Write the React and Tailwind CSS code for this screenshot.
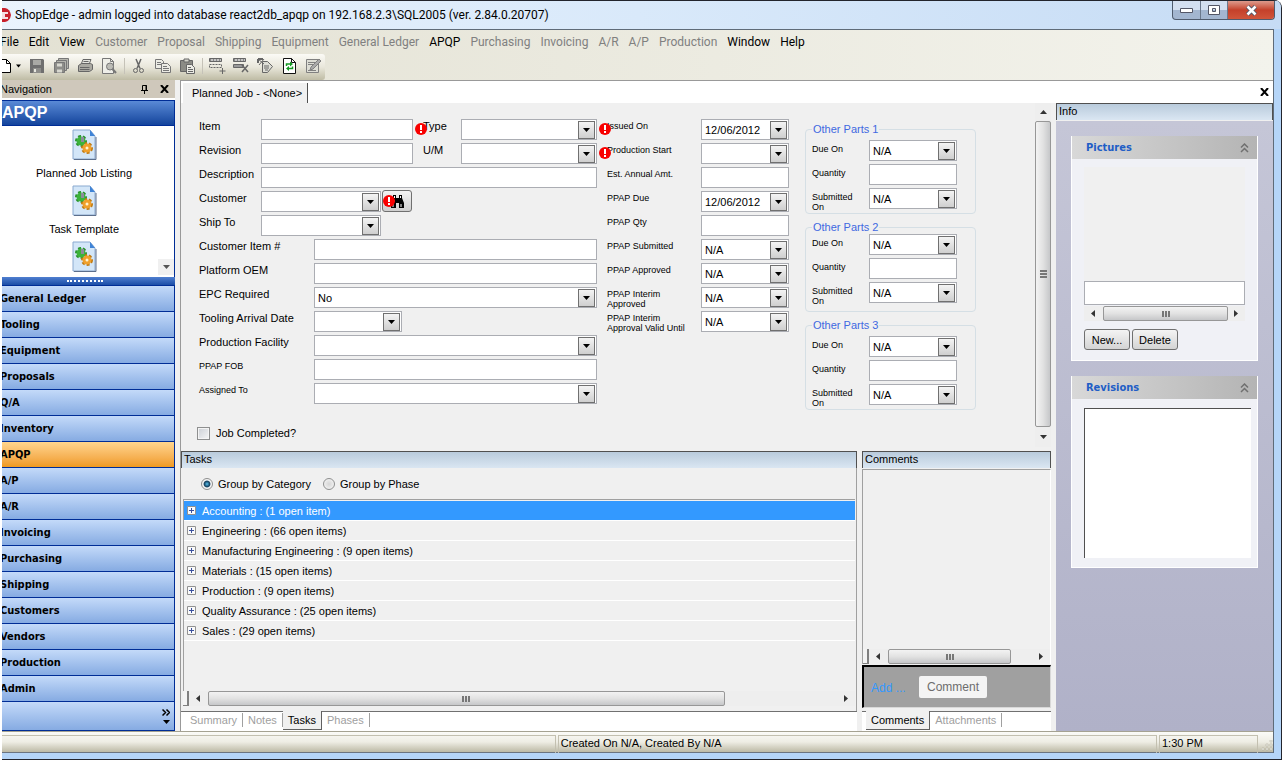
import { useState } from 'react';

const MENU = [
  ['File', true], ['Edit', true], ['View', true], ['Customer', false], ['Proposal', false],
  ['Shipping', false], ['Equipment', false], ['General Ledger', false], ['APQP', true],
  ['Purchasing', false], ['Invoicing', false], ['A/R', false], ['A/P', false],
  ['Production', false], ['Window', true], ['Help', true],
];

const MODULES = [
  'General Ledger', 'Tooling', 'Equipment', 'Proposals', 'Q/A', 'Inventory', 'APQP', 'A/P',
  'A/R', 'Invoicing', 'Purchasing', 'Shipping', 'Customers', 'Vendors', 'Production', 'Admin',
];

const TASKS = [
  'Accounting : (1 open item)',
  'Engineering : (66 open items)',
  'Manufacturing Engineering : (9 open items)',
  'Materials : (15 open items)',
  'Production : (9 open items)',
  'Quality Assurance : (25 open items)',
  'Sales : (29 open items)',
];

const TOOLBAR = [
  ['Save', 'save'], ['Save all', 'saveAll'], ['Print', 'print'], ['Print preview', 'preview'], null,
  ['Cut', 'cut'], ['Copy', 'copy'], ['Paste', 'paste'], null,
  ['Add row', 'addRow'], ['Delete row', 'delRow'], ['Properties', 'props'], ['Refresh', 'refresh'], ['Edit', 'edit'],
];

const ICONS = {
  save: (
    <g>
      <path d="M1 1h13l1 1v13H1z" fill="#6f6f6f" />
      <path d="M4 2h8v5H4z" fill="#a9a9a5" />
      <path d="M4 10h8v5H4z" fill="#8d8d8a" />
      <path d="M5 11h2v3H5z" fill="#e8e8e0" />
    </g>
  ),
  saveAll: (
    <g stroke="#777" fill="#b5b5ae">
      <path d="M5.500 .5h10v10h-10z" />
      <path d="M3.500 2.500h10v10h-10z" />
      <path d="M1.500 4.500h10v10h-10z" fill="#8e8e8a" />
      <path d="M4 5.500h5v3H4zM4 11.500h5v3H4z" fill="#d8d8d0" stroke="none" />
    </g>
  ),
  print: (
    <g stroke="#666" fill="#e4e4de">
      <path d="M6 1.500h8l-2 5H4z" />
      <path d="M1.500 7.500l3-2h9l2 1v5l-3 2h-11z" fill="#aaa9a2" />
      <path d="M3 9.500h9.500M3 11.500h9.500M6.500 3.500h5" fill="none" />
    </g>
  ),
  preview: (
    <g stroke="#777" fill="#eeeee8">
      <path d="M1.500 .5h8l3 3v12h-11z" />
      <path d="M9.500 .5v3h3" fill="none" />
      <circle cx="9" cy="8.500" r="3.500" fill="#bcbcb6" />
      <path d="M11.500 11l3.500 4" strokeWidth="2" />
    </g>
  ),
  cut: (
    <g stroke="#666" fill="none">
      <path d="M5 1l4 9.500M10 1L6 10.500" strokeWidth="1.500" />
      <circle cx="4.500" cy="12.500" r="2" />
      <circle cx="10.500" cy="12.500" r="2" />
    </g>
  ),
  copy: (
    <g stroke="#777" fill="#ecece5">
      <path d="M.5 1.500h6l2 2v7h-8z" />
      <path d="M2 4.500h4M2 6.500h4" />
      <path d="M6.500 5.500h6l3 3v6h-9z" />
      <path d="M8 8.500h4M8 10.500h6M8 12.500h6" />
    </g>
  ),
  paste: (
    <g stroke="#666">
      <path d="M1.500 2.500h12v11h-12z" fill="#8c8c86" />
      <path d="M5 1h5v3H5z" fill="#d5d5cc" />
      <path d="M7.500 6.500h5l3 3v6h-8z" fill="#ecece5" />
      <path d="M9 9.500h3M9 11.500h5M9 13.500h5" />
    </g>
  ),
  addRow: (
    <g stroke="#666" fill="none">
      <path d="M.5 .5h12v3H.5z" fill="#888" />
      <path d="M2 2h10" stroke="#fff" strokeDasharray="2 1" />
      <path d="M.5 6.500h12v3H.5z" strokeDasharray="2 1" />
      <path d="M13.500 10v6M10.500 13h6" />
    </g>
  ),
  delRow: (
    <g stroke="#666" fill="none">
      <path d="M.5 .5h12v3H.5z" fill="#888" />
      <path d="M2 2h10" stroke="#fff" strokeDasharray="2 1" />
      <path d="M.5 6.500h10v3H.5z" fill="#999" />
      <path d="M9 7l6 7M15 7l-6 7" strokeWidth="1.500" />
    </g>
  ),
  props: (
    <g stroke="#666" fill="#deded6">
      <path d="M5.500 3.500h5l5 5-5 6h-5z" />
      <path d="M1 1l6 5M7 1L2 7M7 8h5M7 10h5M8 12h3" fill="none" />
      <path d="M1 1h5M1 1v4" fill="none" strokeWidth="2" />
    </g>
  ),
  refresh: (
    <g>
      <path d="M2.500 .5h8l4 4v11h-12z" fill="#fff" stroke="#111" />
      <path d="M10.500 .5v4h4" fill="none" stroke="#111" />
      <path d="M5.500 8V6h4M11.500 8.500v2h-4" fill="none" stroke="#149a22" strokeWidth="1.500" />
      <path d="M9 3.500L12 6 9 8.500zM8 8l-3 2.500L8 13z" fill="#149a22" />
    </g>
  ),
  edit: (
    <g stroke="#808080" fill="#deded6">
      <path d="M1.500 1.500h12v13h-12z" />
      <path d="M3 4.500h7M3 6.500h5M3 12.500h8" />
      <path d="M5 12l1-3 8-8 2 2-8 8z" fill="#aaa" />
    </g>
  ),
};

function ToolIcon({ name }) {
  return (
    <svg width="16" height="16" viewBox="0 0 16 16" className="overflow-visible" aria-hidden="true">
      {ICONS[name]}
    </svg>
  );
}

function Caret({ className = '' }) {
  return (
    <svg width="7" height="4" viewBox="0 0 7 4" className={className} aria-hidden="true">
      <path d="M0 0h7L3.500 4z" fill="currentColor" />
    </svg>
  );
}

function CloseX() {
  return (
    <svg width="9" height="8" viewBox="0 0 9 8" aria-hidden="true">
      <path d="M1 0l7 8M8 0L1 8" stroke="#000" strokeWidth="2" />
    </svg>
  );
}

function ErrorMark() {
  return (
    <svg width="12" height="12" viewBox="0 0 12 12" className="absolute left-full top-1 ml-0.5 z-10" role="img" aria-label="Required">
      <circle cx="6" cy="6" r="6" fill="#f80000" />
      <path d="M5 2h2v5H5zM5 8h2v2H5z" fill="#fff" />
    </svg>
  );
}

function TextBox({ id, width, error }) {
  return (
    <div className={`relative ${width}`}>
      <input id={id} type="text" className="block w-full h-[21px] px-1 bg-white border border-[#abadb3]" />
      {error && <ErrorMark />}
    </div>
  );
}

function Combo({ id, width, value = '', error }) {
  return (
    <div className={`relative ${width}`}>
      <select id={id} defaultValue={value} className="block appearance-none w-full h-[21px] pl-[3px] pr-5 bg-white border border-[#abadb3]">
        <option value={value}>{value}</option>
      </select>
      <span className="absolute right-0.5 top-0.5 w-[17px] h-[18px] flex items-center justify-center border border-[#707070] bg-linear-to-b from-[#f4f4f4] to-[#cfcfcf] pointer-events-none">
        <Caret />
      </span>
      {error && <ErrorMark />}
    </div>
  );
}

function Row({ label, id, labelWidth, small, children }) {
  return (
    <div className="flex h-6">
      <label htmlFor={id} className={`${labelWidth} shrink-0 whitespace-nowrap ${small ? 'text-[9px] leading-[10px] pt-0.5' : 'leading-[14px]'}`}>
        {label}
      </label>
      {children}
    </div>
  );
}

function OtherParts({ n, pad }) {
  const rows = [['Due On', true], ['Quantity', false], ['Submitted On', true]];
  return (
    <fieldset className={`w-[171px] h-[92px] border border-[#d5dfe5] rounded-[4px] px-[6px] ${pad}`}>
      <legend className="px-px leading-[14px] text-[#4169e1]">Other Parts {n}</legend>
      {rows.map(([label, combo]) => {
        const id = `${label.replace(' ', '-')}-${n}`;
        return (
          <div key={label} className="flex h-6">
            <label htmlFor={id} className="w-[57px] shrink-0 pr-2 pt-1 text-[9px] leading-[10px]">{label}</label>
            {combo ? <Combo id={id} width="w-[88px]" value="N/A" /> : <TextBox id={id} width="w-[88px]" />}
          </div>
        );
      })}
    </fieldset>
  );
}

function Arrow({ dir }) {
  const d = { left: 'M5 0v7L1 3.500z', right: 'M1 0v7L5 3.500z', up: 'M0 5h7L3.500 1z', down: 'M0 1h7L3.500 5z' }[dir];
  return (
    <svg width="7" height="7" viewBox="0 0 7 7" className="shrink-0" aria-hidden="true">
      <path d={d} fill="#333" />
    </svg>
  );
}

function HScroll({ thumb, grip }) {
  return (
    <div className="flex items-stretch h-[15px] bg-[#eeeeee]">
      {grip && <span className="w-[6px] shrink-0 border-r-2 border-b border-[#808080] bg-[#f4f4f4]" />}
      <span className="w-[19px] shrink-0 flex items-center justify-center"><Arrow dir="left" /></span>
      <span className="flex-1 flex">
        <span className={`${thumb} flex items-center justify-center gap-px border border-[#979797] rounded-[2px] bg-linear-to-b from-[#f3f3f3] via-[#e2e2e2] to-[#c6c7c9]`}>
          <i className="w-0.5 h-1.5 bg-[#777]" /><i className="w-0.5 h-1.5 bg-[#777]" /><i className="w-0.5 h-1.5 bg-[#777]" />
        </span>
      </span>
      <span className="w-[17px] shrink-0 flex items-center justify-center"><Arrow dir="right" /></span>
    </div>
  );
}

function VScroll() {
  return (
    <div className="w-[16px] shrink-0 flex flex-col bg-[#eeeeee]">
      <span className="h-[18px] flex items-center justify-center"><Arrow dir="up" /></span>
      <span className="flex-1 flex flex-col items-center justify-center gap-px border border-[#979797] rounded-[2px] bg-linear-to-r from-[#f3f3f3] via-[#e2e2e2] to-[#c6c7c9]">
        <i className="w-[7px] h-0.5 bg-[#777]" /><i className="w-[7px] h-0.5 bg-[#777]" /><i className="w-[7px] h-0.5 bg-[#777]" />
      </span>
      <span className="h-[20px] flex items-center justify-center"><Arrow dir="down" /></span>
    </div>
  );
}

function PaneTitle({ children }) {
  return (
    <h2 className="h-[17px] shrink-0 px-0.5 leading-[15px] border border-b-0 border-[#505050] bg-linear-to-b from-[#b9cbdc] to-[#dae6f2]">
      {children}
    </h2>
  );
}

function Tabs({ items, active, onSelect }) {
  return (
    <div role="tablist" className="flex h-[20px] shrink-0 bg-white pl-1 border-t border-[#707070]">
      {items.map(t => (
        <button
          key={t}
          role="tab"
          aria-selected={t === active}
          onClick={() => onSelect(t)}
          className={t === active
            ? 'px-[5px] -mt-px h-[19px] bg-[#f0f0f0] border-r border-b border-[#606060] text-black'
            : 'px-[5px] mt-px mb-1 border-r border-[#a0a0a0] text-[#a0a0a0]'}
        >
          {t}
        </button>
      ))}
    </div>
  );
}

function DocumentIcon() {
  return (
    <svg width="25" height="32" viewBox="0 0 25 32" className="shrink-0" aria-hidden="true">
      <path d="M1 1h17l5 6v23H1z" fill="#d3e6f8" stroke="#8aa9cf" />
      <path d="M2 30.500h22V8" fill="none" stroke="#5c6f8c" />
      <path d="M18 1v6h5z" fill="#3f83d6" />
      <g fill="none" strokeDasharray="3 2">
        <circle cx="9" cy="12" r="5" stroke="#28912b" strokeWidth="2" />
        <circle cx="15" cy="19" r="5" stroke="#c07a10" strokeWidth="2" />
      </g>
      <circle cx="9" cy="12" r="4.500" fill="#3cb33b" />
      <circle cx="15" cy="19" r="4.500" fill="#f0a02c" />
      <circle cx="15" cy="19" r="1.500" fill="#fff3d0" />
      <path d="M9 8h3v5H9z" fill="#8b8b9b" />
    </svg>
  );
}

function NavPane() {
  const [current, setCurrent] = useState('APQP');
  return (
    <nav className="w-[177px] shrink-0 flex flex-col bg-white">
      <div className="h-[18px] shrink-0 flex items-center pl-0.5 pr-1.5 bg-[#cfc8bb]">
        <span className="flex-1">Navigation</span>
        <button aria-label="Pin" className="mr-3">
          <svg width="7" height="9" viewBox="0 0 7 9" aria-hidden="true">
            <path d="M1.500 5V.5h4V5M0 5.500h7M3.500 5.500V9M5 0v5" fill="none" stroke="#000" />
          </svg>
        </button>
        <button aria-label="Close"><CloseX /></button>
      </div>
      <h1 className="h-[26px] shrink-0 mt-0.5 pl-[3px] leading-[24px] border border-[#002d96] bg-linear-to-b from-[#5a8ad6] to-[#13449c] text-white text-[16px] font-bold">
        APQP
      </h1>
      <div className="flex-1 basis-0 min-h-[151px] overflow-hidden relative border-r border-[#002d96]">
        {['Planned Job Listing', 'Task Template'].map(name => (
          <a key={name} href="#" className="h-14 flex flex-col items-center pt-[3px] mr-1">
            <DocumentIcon />
            <span className="leading-[24px]">{name}</span>
          </a>
        ))}
        <a href="#" aria-label="More" className="flex justify-center pt-[3px] mr-1"><DocumentIcon /></a>
        <button aria-label="Scroll down" className="absolute right-0 bottom-0.5 w-4 h-4 flex items-center justify-center bg-[#f0f0f0] text-[#555]">
          <Caret />
        </button>
      </div>
      <div className="h-[8px] shrink-0 flex items-center justify-center bg-linear-to-b from-[#4f7fd0] to-[#1b4da6]">
        <span className="w-9 mr-1 border-t-2 border-dotted border-white" />
      </div>
      <div className="border-r border-[#002d96] font-['DejaVu_Sans_Condensed',sans-serif] font-bold">
        {MODULES.map(m => (
          <button
            key={m}
            onClick={() => setCurrent(m)}
            className={`block w-full h-[26px] pl-[2px] text-left border-t border-[#002d96] bg-linear-to-b ${m === current ? 'from-[#ffd58d] to-[#ef9a1e]' : 'from-[#c4daf9] to-[#86abe2]'}`}
          >
            {m}
          </button>
        ))}
        <div className="h-[30px] flex flex-col items-end justify-center gap-1 pr-1 border-y border-[#002d96] bg-linear-to-b from-[#c4daf9] to-[#86abe2]">
          <svg width="8" height="7" viewBox="0 0 8 7" aria-hidden="true">
            <path d="M.5 .5l3 3-3 3M4.500 .5l3 3-3 3" fill="none" stroke="#000" strokeWidth="1.500" />
          </svg>
          <Caret />
        </div>
      </div>
    </nav>
  );
}

function JobForm() {
  return (
    <form className="flex-1 min-w-0 pl-[18px] pt-4">
      <div className="flex">
        <div className="w-[398px] shrink-0">
          <div className="flex">
            <div className="w-[224px]">
              <Row label="Item" id="item" labelWidth="w-[62px]"><TextBox id="item" width="w-[152px]" error /></Row>
              <Row label="Revision" id="revision" labelWidth="w-[62px]"><TextBox id="revision" width="w-[152px]" /></Row>
            </div>
            <div>
              <Row label="Type" id="type" labelWidth="w-[38px]"><Combo id="type" width="w-[136px]" error /></Row>
              <Row label="U/M" id="um" labelWidth="w-[38px]"><Combo id="um" width="w-[136px]" error /></Row>
            </div>
          </div>
          <Row label="Description" id="description" labelWidth="w-[62px]"><TextBox id="description" width="flex-1" /></Row>
          <Row label="Customer" id="customer" labelWidth="w-[62px]">
            <Combo id="customer" width="w-[120px]" error />
            <button type="button" aria-label="Find customer" className="-mt-px ml-px w-[30px] h-[22px] flex items-center justify-center border border-[#707070] rounded-[3px] bg-linear-to-b from-[#f2f2f2] to-[#cfcfcf]">
              <svg width="13" height="13" viewBox="0 0 13 13" aria-hidden="true">
                <path d="M2 0h3v3h3V0h3v3l2 5v5H8V8H5v5H0V8l2-5z" fill="#000" />
                <path d="M3.500 1v2M9.500 1v2M3 5v2M2 9v3M10 9v3" stroke="#fff" />
              </svg>
            </button>
          </Row>
          <Row label="Ship To" id="ship-to" labelWidth="w-[62px]"><Combo id="ship-to" width="w-[120px]" /></Row>
          <Row label="Customer Item #" id="cust-item" labelWidth="w-[115px]"><TextBox id="cust-item" width="flex-1" /></Row>
          <Row label="Platform OEM" id="platform" labelWidth="w-[115px]"><TextBox id="platform" width="flex-1" /></Row>
          <Row label="EPC Required" id="epc" labelWidth="w-[115px]"><Combo id="epc" width="flex-1" value="No" /></Row>
          <Row label="Tooling Arrival Date" id="tooling" labelWidth="w-[115px]"><Combo id="tooling" width="w-[88px]" /></Row>
          <Row label="Production Facility" id="facility" labelWidth="w-[115px]"><Combo id="facility" width="flex-1" /></Row>
          <Row label="PPAP FOB" id="fob" labelWidth="w-[115px]" small><TextBox id="fob" width="flex-1" /></Row>
          <Row label="Assigned To" id="assigned" labelWidth="w-[115px]" small><Combo id="assigned" width="flex-1" /></Row>
        </div>

        <div className="w-[182px] shrink-0 ml-[10px]">
          <Row label="Issued On" id="issued" labelWidth="w-[94px]" small><Combo id="issued" width="flex-1" value="12/06/2012" /></Row>
          <Row label="Production Start" id="prod-start" labelWidth="w-[94px]" small><Combo id="prod-start" width="flex-1" /></Row>
          <Row label="Est. Annual Amt." id="annual" labelWidth="w-[94px]" small><TextBox id="annual" width="flex-1" /></Row>
          <Row label="PPAP Due" id="ppap-due" labelWidth="w-[94px]" small><Combo id="ppap-due" width="flex-1" value="12/06/2012" /></Row>
          <Row label="PPAP Qty" id="ppap-qty" labelWidth="w-[94px]" small><TextBox id="ppap-qty" width="flex-1" /></Row>
          <Row label="PPAP Submitted" id="ppap-sub" labelWidth="w-[94px]" small><Combo id="ppap-sub" width="flex-1" value="N/A" /></Row>
          <Row label="PPAP Approved" id="ppap-app" labelWidth="w-[94px]" small><Combo id="ppap-app" width="flex-1" value="N/A" /></Row>
          <Row label={<>PPAP Interim<br />Approved</>} id="interim" labelWidth="w-[94px]" small><Combo id="interim" width="flex-1" value="N/A" /></Row>
          <Row label={<>PPAP Interim<br />Approval Valid Until</>} id="valid" labelWidth="w-[94px]" small><Combo id="valid" width="flex-1" value="N/A" /></Row>
        </div>

        <div className="ml-4 pt-[3px] flex flex-col gap-[6px]">
          <OtherParts n={1} pad="pt-1" />
          <OtherParts n={2} pad="pt-0" />
          <OtherParts n={3} pad="pt-1" />
        </div>
      </div>
      <label className="inline-flex items-center gap-1.5 mt-4 -ml-0.5">
        <input type="checkbox" className="appearance-none w-[13px] h-[13px] border border-[#8e8f8f] bg-linear-to-br from-[#cbcfd5] to-[#f6f6f6] shadow-[inset_0_0_0_1px_#f4f4f4] checked:bg-[#3b6fb5]" />
        Job Completed?
      </label>
    </form>
  );
}

function TaskPane() {
  const [group, setGroup] = useState('Category');
  const [tab, setTab] = useState('Tasks');
  const [selected, setSelected] = useState(0);
  return (
    <section className="flex-1 min-w-0 flex flex-col">
      <PaneTitle>Tasks</PaneTitle>
      <div className="flex-1 flex flex-col border-r border-[#a0a0a0] pl-0.5 pr-px">
        <div className="h-[31px] flex items-center gap-3 pl-[18px]">
          {['Category', 'Phase'].map(g => (
            <label key={g} className="flex items-center gap-[5px]">
              <input
                type="radio"
                name="group"
                checked={group === g}
                onChange={() => setGroup(g)}
                className="appearance-none w-3 h-3 rounded-full border border-[#8e8f8f] bg-radial from-[#d5d5d5] to-[#fafafa] checked:from-[#5cc3f0] checked:via-[#12405e] checked:via-40% checked:to-[#f4f4f4] checked:to-55%"
              />
              Group by {g}
            </label>
          ))}
        </div>
        <ul className="flex-1 border-t border-l border-[#a0a0a0] pt-px">
          {TASKS.map((t, i) => (
            <li key={t}>
              <button
                onClick={() => setSelected(i)}
                className={`w-full h-5 flex items-center gap-1.5 pl-[3px] text-left border-b border-white ${i === selected ? 'bg-[#3399ff] text-white' : ''}`}
              >
                <svg width="9" height="9" viewBox="0 0 9 9" aria-hidden="true">
                  <path d="M.5 .5h8v8h-8z" fill="#fafafa" stroke="#919191" />
                  <path d="M2 4.500h5M4.500 2v5" stroke="#3a4f9c" />
                </svg>
                {t}
              </button>
            </li>
          ))}
        </ul>
        <HScroll thumb="w-[82%]" grip />
        <div className="h-[5px]" />
      </div>
      <Tabs items={['Summary', 'Notes', 'Tasks', 'Phases']} active={tab} onSelect={setTab} />
    </section>
  );
}

function CommentPane() {
  const [tab, setTab] = useState('Comments');
  return (
    <section className="w-[189px] shrink-0 flex flex-col">
      <PaneTitle>Comments</PaneTitle>
      <div className="flex-1 mt-px flex flex-col border border-b-0 border-r-white border-[#a0a0a0]">
        <div className="flex-1" />
        <HScroll thumb="w-[85%]" grip />
      </div>
      <div className="h-[43px] mb-[3px] mt-px flex items-center pl-[7px] border-t-2 border-l-2 border-r border-b border-t-black border-l-black border-[#d8d8d8] bg-[#a0a0a0]">
        <a href="#" className="w-12 pt-0.5 text-[12px] text-[#3399ff]">Add ...</a>
        <button className="h-[22px] px-2 rounded-[2px] bg-[#f4f4f4] text-[12px] text-[#6d6d6d]">Comment</button>
      </div>
      <Tabs items={['Comments', 'Attachments']} active={tab} onSelect={setTab} />
    </section>
  );
}

function InfoCard({ title, children }) {
  return (
    <section className="bg-[#f0f1f6] border border-white border-t-0">
      <h3 className="h-[23px] flex items-center justify-between pl-[14px] pr-2 bg-linear-to-r from-[#d8d8d8] to-[#b4b4b4] text-[#215dc6] font-bold font-['DejaVu_Sans_Condensed',sans-serif]">
        {title}
        <svg width="9" height="10" viewBox="0 0 9 10" aria-hidden="true">
          <path d="M1 4.500L4.500 1 8 4.500M1 9l3.500-3.500L8 9" fill="none" stroke="#707070" strokeWidth="1.500" />
        </svg>
      </h3>
      {children}
    </section>
  );
}

function InfoPane() {
  const btn = 'h-[21px] border border-[#707070] rounded-[3px] bg-linear-to-b from-[#f4f4f4] to-[#d4d4d4]';
  return (
    <aside className="w-[217px] shrink-0 flex flex-col">
      <PaneTitle>Info</PaneTitle>
      <div className="flex-1 mt-px pt-[15px] px-[15px] flex flex-col gap-[15px] bg-linear-to-b from-[#c5c6d7] to-[#b0b1c8]">
        <InfoCard title="Pictures">
          <div className="px-3 pt-2 pb-[10px]">
            <div className="h-[114px] bg-[#f0f0f0]" />
            <input aria-label="Picture name" type="text" className="block w-full h-6 px-1 bg-white border border-[#abadb3]" />
            <div className="pt-px"><HScroll thumb="w-full" /></div>
            <div className="mt-[8px] flex gap-0.5">
              <button className={`${btn} w-[46px]`}>New...</button>
              <button className={`${btn} w-[46px]`}>Delete</button>
            </div>
          </div>
        </InfoCard>
        <InfoCard title="Revisions">
          <div className="pl-3 pr-[6px] py-[9px]">
            <div className="h-[150px] bg-white border-t border-l border-[#505050]" />
          </div>
        </InfoCard>
      </div>
    </aside>
  );
}

function TitleBar() {
  return (
    <header className="h-[29px] shrink-0 flex items-start border-t border-[#22242c] bg-linear-to-r from-[#eaf3fd] via-[#d9e9fa] to-[#c6dcf5]">
      <div className="flex-1 h-full flex items-center gap-1 text-[12px] font-[Roboto,sans-serif]">
        <svg width="13" height="16" viewBox="0 0 13 16" aria-hidden="true">
          <path d="M0 1h7q5 1 6 7-1 6-6 7H0z" fill="#c8202c" />
          <path d="M0 5h10v2H7v3h3v2H0V10h3V7H0z" fill="#f4dfe2" />
        </svg>
        ShopEdge - admin logged into database react2db_apqp on 192.168.2.3\SQL2005 (ver. 2.84.0.20707)
      </div>
      <div className="flex h-[19px] mr-[6px] border border-t-0 border-[#4f5b6d] rounded-b-[4px] overflow-hidden bg-linear-to-b from-[#d3dff0] from-50% to-[#a3b6d0] to-50%">
        <button aria-label="Minimize" className="w-7 flex items-center justify-center border-r border-[#6a788c]">
          <svg width="13" height="5" viewBox="0 0 13 5"><path d="M.5 .5h12v4H.5z" fill="#fff" stroke="#535666" /></svg>
        </button>
        <button aria-label="Maximize" className="w-[27px] flex items-center justify-center border-r border-[#6a788c]">
          <svg width="12" height="10" viewBox="0 0 12 10"><path d="M.5 .5h11v9H.5zM4.500 3.500h3v3h-3z" fill="#fff" fillRule="evenodd" stroke="#535666" /></svg>
        </button>
        <button aria-label="Close" className="w-[46px] flex items-center justify-center bg-linear-to-b from-[#dc9a8c] via-[#c4402a] via-50% to-[#d0553a]">
          <svg width="13" height="11" viewBox="0 0 13 11">
            <path d="M2.500 1.500l8 8M10.500 1.500l-8 8" stroke="#535666" strokeWidth="4.500" />
            <path d="M2.500 1.500l8 8M10.500 1.500l-8 8" stroke="#fff" strokeWidth="2.500" />
          </svg>
        </button>
      </div>
    </header>
  );
}

function ToolBar() {
  return (
    <div className="h-[26px] shrink-0 flex">
      <div className="flex items-start rounded-r-[3px] bg-linear-to-b from-[#fbfaf6] via-[#e9e7db] to-[#bfbca5]">
        <button aria-label="New" className="w-[14px] h-6 flex items-center">
          <svg width="14" height="16" viewBox="0 0 14 16" aria-hidden="true">
            <path d="M.5 1.500h8l4 4v9H.5z" fill="#fff" stroke="#000" />
            <path d="M8.500 1.500v4h4" fill="none" stroke="#000" />
          </svg>
        </button>
        <button aria-label="New options" className="w-[13px] h-6 flex items-center justify-center"><Caret className="w-[5px]" /></button>
        {TOOLBAR.map((b, i) => b ? (
          <button key={b[0]} aria-label={b[0]} className="w-6 h-6 flex items-center justify-center"><ToolIcon name={b[1]} /></button>
        ) : (
          <span key={i} className="w-[6px] h-6 py-1 flex justify-center"><i className="w-px bg-[#c5c2b8]" /></span>
        ))}
      </div>
    </div>
  );
}

function StatusBar() {
  const cell = 'h-[18px] mt-[3px] px-0.5 leading-[15px] border border-b-0 border-[#c3c0b0]';
  return (
    <footer className="h-[22px] shrink-0 flex gap-0.5 border-y border-t-[#a5a292] border-b-[#6b7480] bg-linear-to-b from-[#fbfbf8] via-[#eeede4] to-[#bdbaa6]">
      <div className={`${cell} flex-[558]`} />
      <div className={`${cell} flex-[600]`}>Created On N/A, Created By N/A</div>
      <div className={`${cell} w-[99px]`}>1:30 PM</div>
      <div className="w-[13px] flex items-end justify-end pb-px">
        <svg width="11" height="11" viewBox="0 0 11 11" aria-hidden="true">
          <path d="M8 0h2v2H8zM4 4h2v2H4zM8 4h2v2H8zM0 8h2v2H0zM4 8h2v2H4zM8 8h2v2H8z" fill="#f8f8f4" stroke="#aaa797" strokeWidth=".5" />
        </svg>
      </div>
    </footer>
  );
}

export default function App() {
  return (
    <div className="min-h-screen flex flex-col pl-0.5 overflow-hidden bg-white text-black text-[11px] leading-[14px] font-['Liberation_Sans',Arial,sans-serif]">
      {/* the window hangs slightly past the left edge of the screen */}
      <div className="overflow-hidden flex-1 flex flex-col">
        <div className="-ml-1 flex-1 flex flex-col border-r border-b-2 border-[#22242c] rounded-tr-[8px] bg-[#b5d5f8] overflow-hidden">
          <TitleBar />
          <div className="flex-1 flex flex-col mr-[7px] mb-[6px] border-r border-t border-[#5f6b78] bg-linear-to-r from-[#e3e1d3] to-[#f3f3ec]">
            <nav className="h-[24px] shrink-0 flex items-center gap-[10px] pl-0.5 text-[12px] font-[Roboto,sans-serif]">
              {MENU.map(([name, enabled]) => (
                <button key={name} disabled={!enabled} className={enabled ? 'text-black' : 'text-[#808080]'}>{name}</button>
              ))}
            </nav>
            <ToolBar />
            <div className="flex-1 flex bg-[#f0f0f0]">
              <NavPane />
              <main className="flex-1 min-w-0 ml-[5px] flex flex-col border-l border-t border-[#999]">
                <div className="h-[22px] shrink-0 flex items-stretch justify-between bg-white">
                  <button className="ml-0.5 mt-0.5 w-[125px] pl-[9px] text-left whitespace-nowrap bg-[#f0f0f0] border-r border-[#505050]">
                    Planned Job - &lt;None&gt;
                  </button>
                  <button aria-label="Close tab" className="pr-1"><CloseX /></button>
                </div>
                <div className="flex-1 flex">
                  <div className="flex-1 min-w-0 flex flex-col">
                    <div className="h-[348px] flex pb-1">
                      <JobForm />
                      <VScroll />
                    </div>
                    <div className="flex-1 flex gap-[5px]">
                      <TaskPane />
                      <CommentPane />
                    </div>
                  </div>
                  <div className="w-[5px]" />
                  <InfoPane />
                </div>
              </main>
            </div>
            <StatusBar />
          </div>
        </div>
      </div>
    </div>
  );
}
